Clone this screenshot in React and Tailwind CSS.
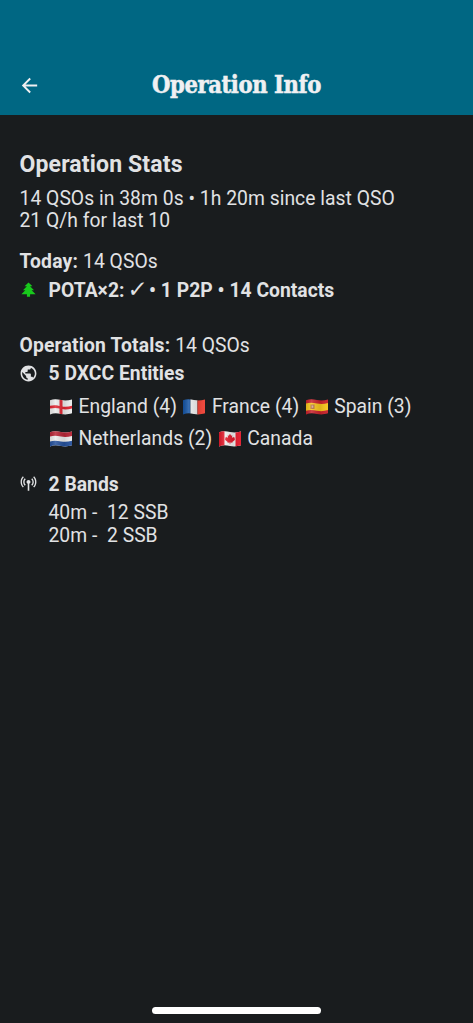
import { MdArrowBack, MdPublic } from "react-icons/md";

const entityRows = [
  [
    { flag: "england", label: "England (4)" },
    { flag: "france", label: "France (4)" },
    { flag: "spain", label: "Spain (3)" },
  ],
  [
    { flag: "netherlands", label: "Netherlands (2)" },
    { flag: "canada", label: "Canada" },
  ],
];

const bands = ["40m -\u00a0 12 SSB", "20m -\u00a0 2 SSB"];

const flagShapes = {
  england: (
    <>
      <rect width="22" height="18" fill="#ececec" />
      <path d="M0 7.8C4 6.6 7 7.2 11 8.2s7 .6 11-.4v2.600c-4 1-7 1.400-11 .4S4 9.600 0 10.600z" fill="#df2430" />
      <path d="M9.500 0h3v18h-3z" fill="#df2430" />
    </>
  ),
  france: (
    <>
      <rect width="7.5" height="18" fill="#1454a4" />
      <rect x="7.500" width="7" height="18" fill="#f0f0f0" />
      <rect x="14.500" width="7.5" height="18" fill="#ef4135" />
    </>
  ),
  spain: (
    <>
      <rect width="22" height="18" fill="#c8202a" />
      <path d="M0 5.500C4 4.300 7 4.700 11 5.500s7 .6 11-.4v7c-4 1-7 1.400-11 .6s-7-1.200-11 0z" fill="#f6c51b" />
      <path d="M4.500 6.500h4v4.500h-4z" fill="#b5713a" />
      <path d="M5.700 7.400h1.600v2.400H5.700z" fill="#d9a7a0" />
    </>
  ),
  netherlands: (
    <>
      <rect width="22" height="18" fill="#ececec" />
      <path d="M0 0h22v6c-4 1-7 1.400-11 .6S4 5.400 0 6.600z" fill="#b82536" />
      <path d="M0 11.400c4-1.200 7-.8 11 0s7 .4 11-.6V18H0z" fill="#24509b" />
    </>
  ),
  canada: (
    <>
      <rect width="22" height="18" fill="#f1f1f1" />
      <path d="M0 0h5.500v18H0zM16.500 0H22v18h-5.500z" fill="#e3192b" />
      <path d="M11 3.800l1.200 2 1.100-.5-.4 2.700 1.500-1.200.5.900 1.300-.2-.7 1.500.6.700-2.800 2.200.2.900-2.200-.3v1.700h-.6v-1.700l-2.200.3.200-.9-2.800-2.200.6-.7-.7-1.500 1.300.2.500-.9 1.500 1.200-.4-2.700 1.100.5z" fill="#e3192b" />
    </>
  ),
};

function Flag({ name }) {
  return (
    <svg viewBox="0 0 22 18" className="w-[22px] h-[18px] shrink-0" aria-label={name}>
      <defs>
        <clipPath id={`wave-${name}`}>
          <path d="M0 2.300C4 .9 7 1.300 11 2.100s7 .6 11-.6v13.800c-4 1.200-7 1.500-11 .7s-7-1-11 .4z" />
        </clipPath>
        <linearGradient id={`shade-${name}`}>
          <stop offset="0" stopColor="#000" stopOpacity="0.1" />
          <stop offset="0.25" stopColor="#fff" stopOpacity="0.15" />
          <stop offset="0.65" stopColor="#000" stopOpacity="0.1" />
          <stop offset="1" stopColor="#fff" stopOpacity="0.05" />
        </linearGradient>
      </defs>
      <g clipPath={`url(#wave-${name})`}>
        {flagShapes[name]}
        <rect width="22" height="18" fill={`url(#shade-${name})`} />
      </g>
    </svg>
  );
}

function TreeIcon() {
  return (
    <svg viewBox="0 0 24 24" className="w-[19px] h-[19px]" fill="#18c91c">
      <path d="M10,21V18H3L8,13H5L10,8H7L12,3L17,8H14L19,13H16L21,18H14V21H10Z" />
    </svg>
  );
}

function AntennaIcon() {
  return (
    <svg viewBox="0 0 24 24" className="w-[19px] h-[19px]" fill="currentColor">
      <path d="M12 7.5C12.69 7.5 13.27 7.73 13.76 8.2S14.5 9.27 14.5 10C14.5 11.05 14 11.81 13 12.28V21H11V12.28C10 11.81 9.5 11.05 9.5 10C9.5 9.27 9.76 8.67 10.24 8.2S11.31 7.5 12 7.5M16.69 5.3C17.94 6.55 18.61 8.11 18.7 10C18.7 11.8 18.03 13.38 16.69 14.72L15.5 13.5C16.5 12.59 17 11.42 17 10C17 8.67 16.5 7.5 15.5 6.5L16.69 5.3M6.09 4.08C4.5 5.67 3.7 7.64 3.7 10S4.5 14.3 6.09 15.89L4.92 17.11C3 15.08 2 12.7 2 10C2 7.3 3 4.94 4.92 2.91L6.09 4.08M19.08 2.91C21 4.94 22 7.3 22 10C22 12.8 21 15.17 19.08 17.11L17.91 15.89C19.5 14.3 20.3 12.33 20.3 10S19.5 5.67 17.91 4.08L19.08 2.91M7.31 5.3L8.5 6.5C7.5 7.42 7 8.58 7 10C7 11.33 7.5 12.5 8.5 13.5L7.31 14.72C5.97 13.38 5.3 11.8 5.3 10C5.3 8.2 5.97 6.64 7.31 5.3Z" />
    </svg>
  );
}

function StatRow({ icon, children }) {
  return (
    <div className="flex items-center h-[22px] font-bold whitespace-nowrap">
      <div className="w-[29.5px] h-[21px] shrink-0">{icon}</div>
      <div>{children}</div>
    </div>
  );
}

export default function App() {
  return (
    <div className="h-[1023px] flex flex-col bg-[#191c1e] text-[#e1e2e4] font-[Roboto,sans-serif] text-[19.3px] leading-[22px] tracking-[0.03px]">
      <header className="h-[115px] shrink-0 bg-[#006783] text-[#f0f0f2] flex items-end pb-[13px] px-[17.5px]">
        <div className="w-10 h-[33px] flex items-center">
          <MdArrowBack className="w-[23px] h-[23px]" />
        </div>
        <h1 className="flex-1 text-center text-[23.5px] leading-[34px] font-bold font-[DejaVu_Serif,serif] [font-stretch:condensed] [-webkit-text-stroke:0.5px_#f0f0f2] tracking-[-0.4px] whitespace-nowrap">
          Operation Info
        </h1>
        <div className="w-10" />
      </header>

      <main className="flex-1 pt-9 pl-[19px] pr-5">
        <h2 className="pl-[0.5px] text-[23px] leading-7 font-bold tracking-[0.15px]">Operation Stats</h2>
        <p className="mt-[9px] pl-[0.5px] whitespace-nowrap tracking-[0.04px]">14 QSOs in 38m 0s • 1h 20m since last QSO</p>
        <p className="pl-[0.5px]">21 Q/h for last 10</p>

        <section className="mt-[19px]">
          <p className="pl-[0.5px]"><b className="tracking-[0.2px]">Today: </b>14 QSOs</p>
          <div className="mt-[6px]">
            <StatRow icon={<TreeIcon />}>
              POTA×2: <span className="inline-block w-[15px] font-normal text-[23px] font-[DejaVu_Sans,sans-serif] -skew-x-6 leading-none h-[19px] -ml-px mr-px">✓</span> • 1 P2P • 14 Contacts
            </StatRow>
          </div>
        </section>

        <section className="mt-[34px]">
          <p className="pl-[0.5px]"><b className="tracking-[0.18px]">Operation Totals: </b>14 QSOs</p>
          <div className="mt-[6px]">
            <StatRow icon={<MdPublic className="w-[19px] h-[19px]" />}>5 DXCC Entities</StatRow>
          </div>
          <div className="mt-[6px] pl-[31px]">
            {entityRows.map((row, i) => (
              <div key={i} className="flex items-center h-8 gap-[6.5px] whitespace-nowrap">
                {row.map(({ flag, label }) => (
                  <div key={flag} className="flex items-center gap-[6.5px]">
                    <Flag name={flag} />
                    <span>{label}</span>
                  </div>
                ))}
              </div>
            ))}
          </div>
        </section>

        <section className="mt-[18.5px]">
          <StatRow icon={<AntennaIcon />}>2 Bands</StatRow>
          <div className="mt-[5px] pl-[29.5px] leading-[23px]">
            {bands.map((band) => (
              <p key={band}>{band}</p>
            ))}
          </div>
        </section>
      </main>

      <div className="mx-auto mb-[9px] w-[169px] h-[7px] rounded-full bg-white" />
    </div>
  );
}
